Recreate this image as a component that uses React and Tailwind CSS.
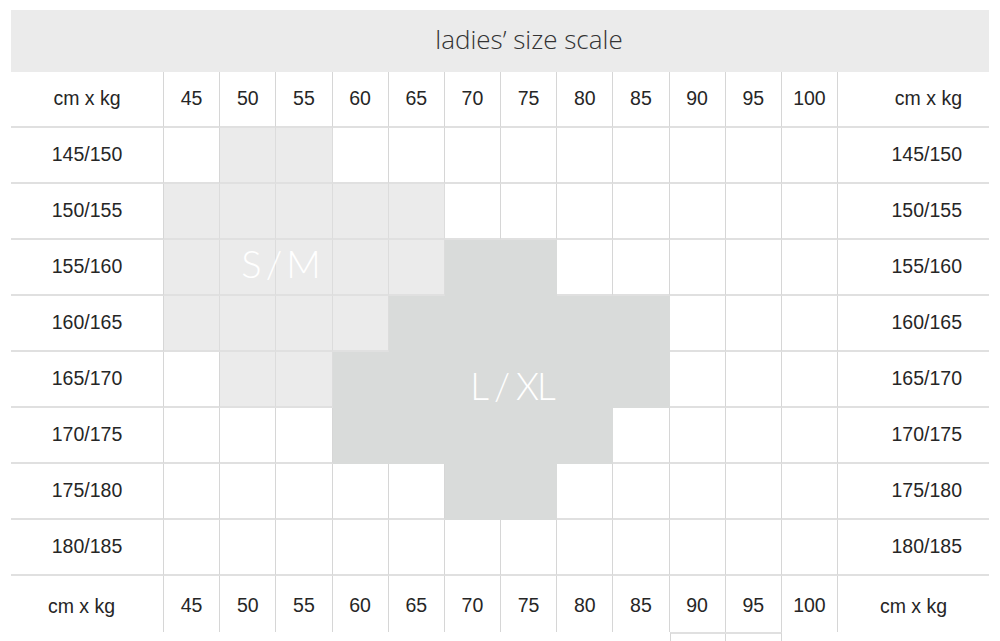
const weights = [45, 50, 55, 60, 65, 70, 75, 80, 85, 90, 95, 100];
const heights = ["145/150", "150/155", "155/160", "160/165", "165/170", "170/175", "175/180", "180/185"];

// which cells are shaded, per body row: [light cols, dark cols]
const shade = [
  [[1, 2], []],
  [[0, 1, 2, 3, 4], []],
  [[0, 1, 2, 3, 4], [5, 6]],
  [[0, 1, 2, 3], [4, 5, 6, 7, 8]],
  [[1, 2], [3, 4, 5, 6, 7, 8]],
  [[], [3, 4, 5, 6, 7]],
  [[], [5, 6]],
  [[], []],
];

function Cell({ tone, children }) {
  let cls = "bg-white border-r-[#d6d6d6] border-b-[#e0e0e0]";
  if (tone === "light") cls = "bg-[#ebebeb] border-r-[#dcdcdc] border-b-[#e0e0e0]";
  if (tone === "dark") cls = "bg-[#d9dbda] border-r-[#d9dbda] border-b-[#d9dbda]";
  return (
    <div className={`h-[56px] flex items-center justify-center border-r border-b-2 ${cls}`}>
      {children}
    </div>
  );
}

export default function App() {
  return (
    <div className="w-[1000px] h-[641px] bg-white pt-[10px] pl-[11px] overflow-hidden text-[#262626] font-['Liberation_Sans',Arial,sans-serif]">
      <div className="w-[978px]">
        {/* Title */}
        <div className="h-[62px] bg-[#ebebeb] flex items-center justify-center pl-[58px] pb-[3px]">
          <span className="text-[26px] font-light text-[#333] font-['Open_Sans',sans-serif]">
            ladies’ size scale
          </span>
        </div>

        {/* Table */}
        <div className="relative grid grid-cols-[153px_repeat(12,1fr)_151px] text-[19.5px]">
          {/* top header row */}
          <div className="h-[56px] flex items-center justify-center border-r border-r-[#d6d6d6] border-b-2 border-b-[#e0e0e0]">
            cm x kg
          </div>
          {weights.map((w) => (
            <Cell key={"h" + w}>{w}</Cell>
          ))}
          <div className="h-[56px] flex items-center justify-end pr-[27px] border-b-2 border-b-[#e0e0e0]">
            cm x kg
          </div>

          {/* body rows */}
          {heights.map((h, r) => (
            <div key={h} className="contents">
              <div className="h-[56px] flex items-center justify-center border-r border-r-[#d6d6d6] border-b-2 border-b-[#e0e0e0]">
                {h}
              </div>
              {weights.map((w, c) => {
                const tone = shade[r][1].includes(c) ? "dark" : shade[r][0].includes(c) ? "light" : null;
                return <Cell key={h + w} tone={tone} />;
              })}
              <div className="h-[56px] flex items-center justify-end pr-[27px] border-b-2 border-b-[#e0e0e0]">
                {h}
              </div>
            </div>
          ))}

          {/* bottom header row */}
          <div className="h-[56px] flex items-center justify-center pr-[11px] pt-[5px] border-r border-r-[#d6d6d6]">
            cm x kg
          </div>
          {weights.map((w) => (
            <div key={"f" + w} className="h-[56px] flex items-center justify-center pt-[4px] border-r border-r-[#d6d6d6]">
              {w}
            </div>
          ))}
          <div className="h-[56px] flex items-center justify-center pt-[5px]">cm x kg</div>

          {/* size labels */}
          <div className="absolute left-[272px] top-[191px] -translate-x-1/2 -translate-y-1/2 text-white text-[38px] font-light leading-none tracking-[4px] font-['Lato',sans-serif]">
            S/M
          </div>
          <div className="absolute left-[501px] top-[313px] -translate-x-1/2 -translate-y-1/2 text-white text-[37px] font-light leading-none tracking-[-2px] font-['Lato',sans-serif]">
            L / XL
          </div>
        </div>

        {/* stray lines under 90 / 95 */}
        <div className="grid grid-cols-[153px_repeat(12,1fr)_151px]">
          <div className="col-start-11 col-span-2 h-[10px] border-t-2 border-t-[#e0e0e0] border-l border-r border-[#d6d6d6] grid grid-cols-2">
            <div className="border-r border-[#d6d6d6]" />
          </div>
        </div>
      </div>
    </div>
  );
}
